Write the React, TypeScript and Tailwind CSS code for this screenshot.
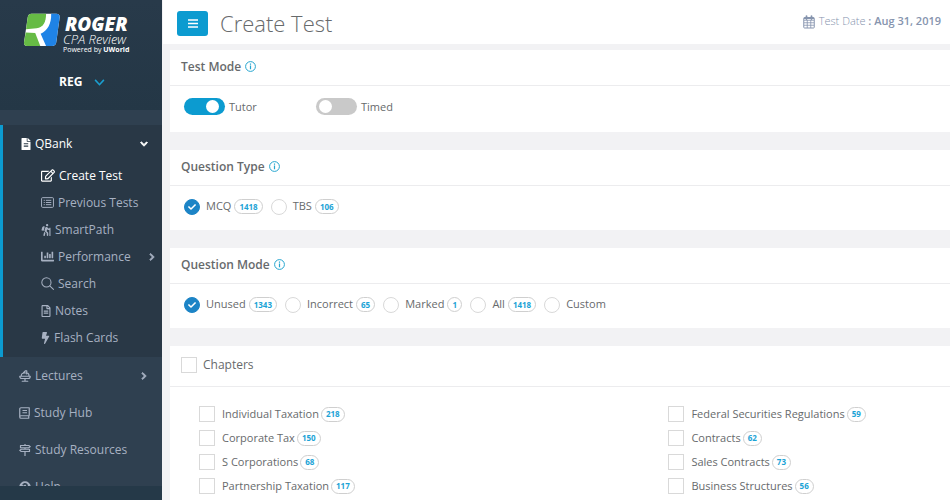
import React, { useId } from "react";
import {
  FaBolt,
  FaChartBar,
  FaCheck,
  FaChevronDown,
  FaChevronRight,
  FaFileAlt,
  FaHiking,
  FaQuestionCircle,
  FaRegEdit,
  FaRegFileAlt,
} from "react-icons/fa";

type IconProps = { className?: string };

const LogoMark = () => (
  <svg viewBox="70 40 112 100" className="h-[34px] w-[38px] shrink-0" aria-hidden="true">
    <path d="M95 42H168Q179 42 178 53L168 126Q166 137 156 137H82Q72 137 73 127L84 52Q86 42 95 42Z" fill="#fff" />
    <path d="M95 42H138C138 66 130 82 110 85L79 88L84 52Q86 42 95 42Z" fill="#66bb45" />
    <path d="M78 97L106 99L121 137H82Q72 137 73 127Z" fill="#66bb45" />
    <path d="M153 42H168Q179 42 178 53L168 126Q166 137 156 137H138L122 101C142 92 154 72 153 42Z" fill="#1f83e6" />
  </svg>
);

const ListIcon = ({ className }: IconProps) => (
  <svg viewBox="0 0 24 20" className={className} fill="none" stroke="currentColor" strokeWidth="1.8" aria-hidden="true">
    <rect x="1" y="1" width="22" height="18" rx="2" />
    <path d="M5 6h2M9 6h10M5 10h2M9 10h10M5 14h2M9 14h10" />
  </svg>
);

const SearchIcon = ({ className }: IconProps) => (
  <svg viewBox="0 0 24 24" className={className} fill="none" stroke="currentColor" strokeWidth="1.9" strokeLinecap="round" aria-hidden="true">
    <circle cx="10" cy="10" r="8.5" />
    <path d="M16.2 16.2L23 23" />
  </svg>
);

const LecternIcon = ({ className }: IconProps) => (
  <svg viewBox="0 0 24 24" className={className} fill="none" stroke="currentColor" strokeWidth="2.400" strokeLinecap="round" strokeLinejoin="round" aria-hidden="true">
    <path d="M1.500 12.500h21c0 2.500-1.500 4.500-4 4.500h-13c-2.500 0-4-2-4-4.500zM4.500 12c0-4 2.500-6 6.500-6h5c2.500 0 4 2.500 4 6M8.500 6L13 1.500h2.500V8M12 17v5M6.500 22.500h11" />
  </svg>
);

const BookIcon = ({ className }: IconProps) => (
  <svg viewBox="0 0 22 24" className={className} fill="none" stroke="currentColor" strokeWidth="2.400" strokeLinejoin="round" aria-hidden="true">
    <path d="M20.500 17.500V1.500H4a2.500 2.500 0 0 0-2.500 2.500v16A2.500 2.500 0 0 0 4 22.500h16.500M20.500 17.500H4a2.500 2.500 0 0 0 0 5M19.500 17.500v5M7 7h9M7 11.500h9" />
  </svg>
);

const SignsIcon = ({ className }: IconProps) => (
  <svg viewBox="0 0 24 24" className={className} fill="none" stroke="currentColor" strokeWidth="2.400" strokeLinejoin="round" aria-hidden="true">
    <path d="M12 0v3M12 7.500v3M12 15v9M3 3h16.500l3 2.250-3 2.250H3zM21 10.500H4.500l-3 2.250 3 2.250H21z" />
  </svg>
);

const CalendarIcon = ({ className }: IconProps) => (
  <svg viewBox="0 0 24 26" className={className} fill="none" stroke="currentColor" strokeWidth="2" aria-hidden="true">
    <rect x="1.500" y="4" width="21" height="21" rx="1.500" />
    <path d="M2 9.500h20M2 14.500h20M2 19.500h20M8.500 9v16M15.500 9v16" strokeWidth="1.600" />
    <path d="M2 5.500h20" strokeWidth="3" />
    <path d="M7 1v6M17 1v6" strokeWidth="3.500" strokeLinecap="round" />
  </svg>
);

const InfoIcon = () => (
  <svg viewBox="0 0 22 22" className="size-[11px] text-[#25a5cf]" fill="none" stroke="currentColor" strokeWidth="2" aria-hidden="true">
    <circle cx="11" cy="11" r="9.800" />
    <path d="M11 9v7.500M11 5v2.500" strokeWidth="2.400" />
  </svg>
);

const subItems = [
  { label: "Create Test", icon: <FaRegEdit className="h-[13px] w-[14px]" />, active: true },
  { label: "Previous Tests", icon: <ListIcon className="h-[11px] w-[13px]" /> },
  { label: "SmartPath", icon: <FaHiking className="h-3 w-[10px]" /> },
  { label: "Performance", icon: <FaChartBar className="h-[13px] w-[13px]" />, more: true },
  { label: "Search", icon: <SearchIcon className="size-[13px]" /> },
  { label: "Notes", icon: <FaRegFileAlt className="h-3 w-[10px]" /> },
  { label: "Flash Cards", icon: <FaBolt className="h-3 w-[9px]" /> },
];

const mainItems = [
  { label: "Lectures", icon: <LecternIcon className="size-3" />, more: true },
  { label: "Study Hub", icon: <BookIcon className="h-3 w-[11px]" /> },
  { label: "Study Resources", icon: <SignsIcon className="size-3" /> },
  { label: "Help", icon: <FaQuestionCircle className="size-3" /> },
];

const Sidebar = () => (
  <aside className="flex w-[162px] shrink-0 flex-col bg-[#2f4050] text-xs text-[#a7b1c2]">
    <div className="h-[110px] shrink-0 bg-linear-to-b from-[#283a4a] to-[#243746] pt-[13px]">
      <div className="flex pl-[23px]">
        <LogoMark />
        <div className="pl-[2px] whitespace-nowrap text-white">
          <div className="pl-[2px] text-[19px] leading-[22px] font-extrabold italic">ROGER</div>
          <div className="text-[13px] leading-[9px] font-light italic">CPA Review</div>
          <div className="text-[7px] leading-[12px]">
            Powered by <b>UWorld</b>
          </div>
        </div>
      </div>
      <button type="button" className="mt-4 ml-[59px] flex h-5 items-center gap-3 text-xs font-bold text-white">
        REG
        <svg viewBox="0 0 12 8" className="h-[7px] w-[11px] text-[#1a9fd0]" fill="none" stroke="currentColor" strokeWidth="1.800" aria-hidden="true">
          <path d="M1 1l5 5.500L11 1" />
        </svg>
      </button>
    </div>
    <nav className="min-h-0 flex-1 overflow-hidden pt-[15px]">
      <div className="border-l-[3px] border-[#0c9bd0] bg-[#293846] pb-[6px]">
        <a href="#qbank" className="flex h-[37px] items-center gap-1 pr-[14px] pl-[18px] font-medium text-white">
          <FaFileAlt className="h-3 w-[10px]" />
          <span className="flex-1">QBank</span>
          <FaChevronDown className="size-2 stroke-current stroke-[60]" />
        </a>
        <ul>
          {subItems.map((item) => (
            <li key={item.label}>
              <a
                href="#section"
                className={`flex h-[27px] items-center gap-1 pr-[6px] pl-[38px] ${item.active ? "font-medium text-white" : ""}`}
              >
                {item.icon}
                <span className="flex-1">{item.label}</span>
                {item.more && <FaChevronRight className="size-2 stroke-current stroke-[60]" />}
              </a>
            </li>
          ))}
        </ul>
      </div>
      <ul>
        {mainItems.map((item) => (
          <li key={item.label}>
            <a href="#section" className="flex h-[37px] items-center gap-1 pr-[14px] pl-[19px]">
              {item.icon}
              <span className="flex-1">{item.label}</span>
              {item.more && <FaChevronRight className="size-2 stroke-current stroke-[60]" />}
            </a>
          </li>
        ))}
      </ul>
    </nav>
    <div className="h-[14px] shrink-0 bg-[#253948]" />
  </aside>
);

const Switch = ({ label, on }: { label: string; on?: boolean }) => {
  const id = useId();
  return (
    <div className="flex w-[124px] items-center gap-1">
      <input
        id={id}
        type="checkbox"
        role="switch"
        defaultChecked={on}
        className="flex h-[17px] w-[41px] appearance-none items-center rounded-full bg-[#c9c9c9] px-[3px] before:size-[13px] before:rounded-full before:bg-white checked:justify-end checked:bg-[#0c9bd0] checked:pr-[6px]"
      />
      <label htmlFor={id} className="pt-[2px]">
        {label}
      </label>
    </div>
  );
};

const Badge = ({ count }: { count: number }) => (
  <span className="flex h-[15px] min-w-[15px] items-center justify-center rounded-full border border-[#cfcfcf] px-1 text-[8px] leading-none font-bold text-[#1ba3d6]">
    {count}
  </span>
);

type OptionProps = { label: string; count?: number; on?: boolean; type: "checkbox" | "radio"; name: string };

const RoundOption = ({ label, count, on, type, name }: OptionProps) => {
  const id = useId();
  return (
    <div className="flex items-center">
      <span className="relative flex">
        <input
          id={id}
          type={type}
          name={name}
          defaultChecked={on}
          className="peer size-4 appearance-none rounded-full border border-[#d9d9d9] bg-white checked:border-[#1c84c6] checked:bg-[#1c84c6]"
        />
        <FaCheck className="pointer-events-none absolute inset-1 hidden size-2 text-white peer-checked:block" />
      </span>
      <label htmlFor={id} className="flex items-center gap-[3px] pl-[6px]">
        {label}
        {count !== undefined && <Badge count={count} />}
      </label>
    </div>
  );
};

const SquareBox = ({ id }: { id: string }) => (
  <input id={id} type="checkbox" className="size-4 shrink-0 appearance-none border border-[#d9d9d9] bg-white checked:bg-[#1c84c6]" />
);

const Card = ({ title, tall, children }: { title: string; tall?: boolean; children: React.ReactNode }) => (
  <section className="mb-[18px] bg-white">
    <h2 className="flex h-9 items-center gap-1 border-b border-[#ececee] pb-[2px] pl-[11px] text-xs font-semibold">
      {title}
      <InfoIcon />
    </h2>
    <div className={`flex items-center gap-2 pl-[14px] ${tall ? "h-[46px] pb-[6px]" : "h-11 pb-[3px]"}`}>{children}</div>
  </section>
);

const leftChapters: [string, number][] = [
  ["Individual Taxation", 218],
  ["Corporate Tax", 150],
  ["S Corporations", 68],
  ["Partnership Taxation", 117],
];

const rightChapters: [string, number][] = [
  ["Federal Securities Regulations", 59],
  ["Contracts", 62],
  ["Sales Contracts", 73],
  ["Business Structures", 56],
];

const ChapterList = ({ items }: { items: [string, number][] }) => {
  const base = useId();
  return (
    <ul>
      {items.map(([name, count], i) => (
        <li key={name} className="flex h-6 items-center">
          <SquareBox id={base + i} />
          <label htmlFor={base + i} className="flex items-center gap-[2px] pl-[7px] whitespace-nowrap">
            {name}
            <Badge count={count} />
          </label>
        </li>
      ))}
    </ul>
  );
};

export default function App() {
  return (
    <div className="flex h-screen overflow-hidden bg-[#f2f2f4] font-['Open_Sans','Noto_Sans',sans-serif] text-[11px] text-[#676a6c]">
      <Sidebar />
      <main className="min-w-0 flex-1 overflow-hidden">
        <header className="ml-px flex h-11 items-center bg-white pt-[3px] pr-[9px] pl-[14px]">
          <button type="button" aria-label="Toggle menu" className="flex h-[25px] w-[31px] items-center justify-center rounded-[3px] bg-[#0c9bd0] text-white">
            <svg viewBox="0 0 10 9" className="h-[9px] w-[10px]" fill="none" stroke="currentColor" strokeWidth="1.600" aria-hidden="true">
              <path d="M0 1h10M0 4.500h10M0 8h10" />
            </svg>
          </button>
          <h1 className="pb-[2px] pl-3 text-[22px] leading-none font-light">Create Test</h1>
          <div className="ml-auto flex items-center gap-1 pb-1 text-[11px] text-[#8694ae]">
            <CalendarIcon className="h-[14px] w-3" />
            <span className="font-light">
              Test Date <span className="font-semibold">: Aug 31, 2019</span>
            </span>
          </div>
        </header>
        <div className="pt-[6px] pl-2">
          <Card title="Test Mode" tall>
            <Switch label="Tutor" on />
            <Switch label="Timed" />
          </Card>
          <Card title="Question Type">
            <RoundOption type="checkbox" name="type" label="MCQ" count={1418} on />
            <RoundOption type="checkbox" name="type" label="TBS" count={106} />
          </Card>
          <Card title="Question Mode">
            <RoundOption type="radio" name="mode" label="Unused" count={1343} on />
            <RoundOption type="radio" name="mode" label="Incorrect" count={65} />
            <RoundOption type="radio" name="mode" label="Marked" count={1} />
            <RoundOption type="radio" name="mode" label="All" count={1418} />
            <RoundOption type="radio" name="mode" label="Custom" />
          </Card>
          <section className="bg-white pb-6">
            <div className="flex h-[41px] items-center gap-[6px] border-b border-[#ececee] pb-[2px] pl-[11px] text-xs">
              <SquareBox id="chapters" />
              <label htmlFor="chapters">Chapters</label>
            </div>
            <div className="grid grid-cols-[5fr_3fr] pt-[15px] pl-[29px]">
              <ChapterList items={leftChapters} />
              <ChapterList items={rightChapters} />
            </div>
          </section>
        </div>
      </main>
    </div>
  );
}
